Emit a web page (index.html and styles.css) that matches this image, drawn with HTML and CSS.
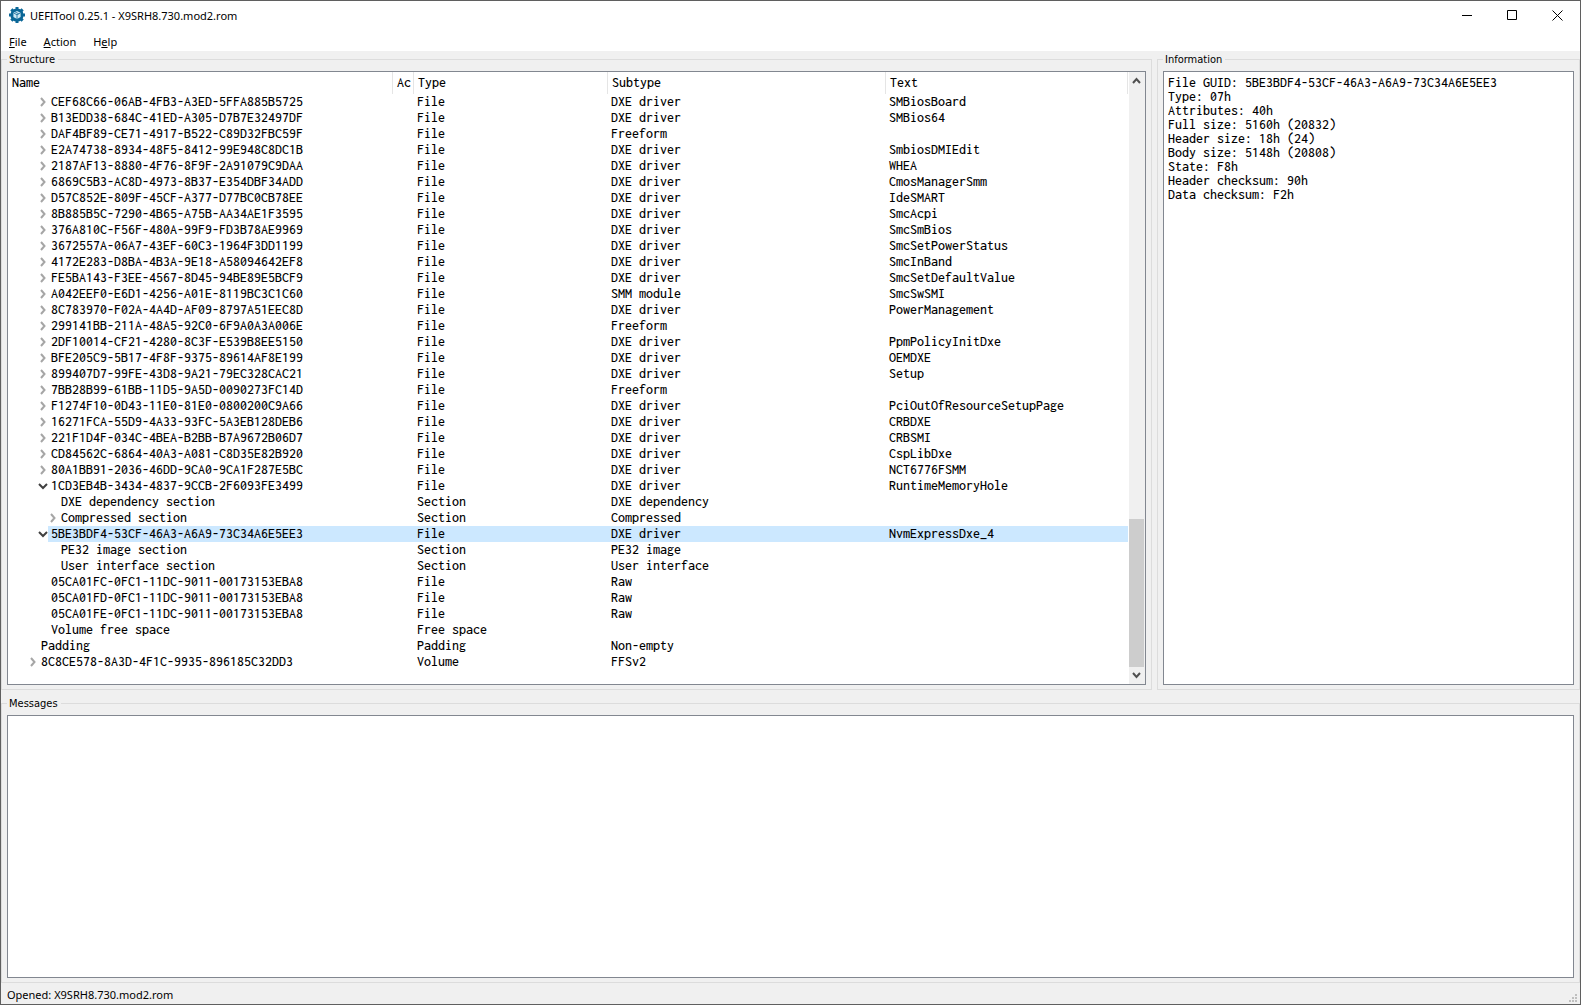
FILE: index.html
```html
<!DOCTYPE html>
<html lang="en">
<head>
<meta charset="utf-8">
<title>UEFITool 0.25.1 - X9SRH8.730.mod2.rom</title>
<link rel="stylesheet" href="styles.css">
</head>
<body>
<svg width="0" height="0" class="defs" aria-hidden="true">
  <symbol id="closed" viewBox="0 0 7 10"><path d="M1 1l3.500 4-3.500 4" fill="none" stroke="#a6a6a6" stroke-width="2"/></symbol>
  <symbol id="open" viewBox="0 0 10 7"><path d="M1 1l4 4 4-4" fill="none" stroke="#404040" stroke-width="2"/></symbol>
</svg>
<div class="window">
  <header class="titlebar">
    <svg class="app-icon" viewBox="0 0 16 16" aria-hidden="true">
      <circle cx="8" cy="8" r="6.6" fill="#0b6797"/>
      <path d="M8 0v16M0 8h16M2.340 2.340l11.320 11.320M13.660 2.340L2.340 13.660" stroke="#0b6797" stroke-width="3"/>
      <path d="M8 4l3.600 1.800v4.200l-3.600 2-3.600-2V5.800z" fill="#cfe8f4"/>
      <path d="M4.400 5.800l3.600 2 3.600-2M8 7.800V12M6.200 5l3.600 1.800" fill="none" stroke="#0b6797" stroke-width=".8"/>
    </svg>
    <h1 class="title">UEFITool 0.25.1 - X9SRH8.730.mod2.rom</h1>
    <div class="controls">
      <button type="button" aria-label="Minimize"><svg viewBox="0 0 11 11"><path d="M0 5.500h10"/></svg></button>
      <button type="button" aria-label="Maximize"><svg viewBox="0 0 11 11"><path d="M.5.5h9v9h-9z"/></svg></button>
      <button type="button" aria-label="Close"><svg viewBox="0 0 11 11"><path d="M.5.5l10 10M10.500.5l-10 10"/></svg></button>
    </div>
  </header>
  <nav class="menubar">
    <button type="button"><u>F</u>ile</button>
    <button type="button"><u>A</u>ction</button>
    <button type="button">H<u>e</u>lp</button>
  </nav>
  <main class="content">
    <div class="top">
      <fieldset class="group">
        <legend>Structure</legend>
        <div class="box tree">
          <table>
            <colgroup><col class="c-name"><col class="c-action"><col class="c-type"><col class="c-subtype"><col class="c-text"></colgroup>
            <thead><tr><th>Name</th><th>Ac</th><th>Type</th><th>Subtype</th><th>Text</th></tr></thead>
            <tbody>
<tr><td class="d2"><svg class="a"><use href="#closed"/></svg><span>CEF68C66-06AB-4FB3-A3ED-5FFA885B5725</span></td><td></td><td>File</td><td>DXE driver</td><td>SMBiosBoard</td></tr>
<tr><td class="d2"><svg class="a"><use href="#closed"/></svg><span>B13EDD38-684C-41ED-A305-D7B7E32497DF</span></td><td></td><td>File</td><td>DXE driver</td><td>SMBios64</td></tr>
<tr><td class="d2"><svg class="a"><use href="#closed"/></svg><span>DAF4BF89-CE71-4917-B522-C89D32FBC59F</span></td><td></td><td>File</td><td>Freeform</td><td></td></tr>
<tr><td class="d2"><svg class="a"><use href="#closed"/></svg><span>E2A74738-8934-48F5-8412-99E948C8DC1B</span></td><td></td><td>File</td><td>DXE driver</td><td>SmbiosDMIEdit</td></tr>
<tr><td class="d2"><svg class="a"><use href="#closed"/></svg><span>2187AF13-8880-4F76-8F9F-2A91079C9DAA</span></td><td></td><td>File</td><td>DXE driver</td><td>WHEA</td></tr>
<tr><td class="d2"><svg class="a"><use href="#closed"/></svg><span>6869C5B3-AC8D-4973-8B37-E354DBF34ADD</span></td><td></td><td>File</td><td>DXE driver</td><td>CmosManagerSmm</td></tr>
<tr><td class="d2"><svg class="a"><use href="#closed"/></svg><span>D57C852E-809F-45CF-A377-D77BC0CB78EE</span></td><td></td><td>File</td><td>DXE driver</td><td>IdeSMART</td></tr>
<tr><td class="d2"><svg class="a"><use href="#closed"/></svg><span>8B885B5C-7290-4B65-A75B-AA34AE1F3595</span></td><td></td><td>File</td><td>DXE driver</td><td>SmcAcpi</td></tr>
<tr><td class="d2"><svg class="a"><use href="#closed"/></svg><span>376A810C-F56F-480A-99F9-FD3B78AE9969</span></td><td></td><td>File</td><td>DXE driver</td><td>SmcSmBios</td></tr>
<tr><td class="d2"><svg class="a"><use href="#closed"/></svg><span>3672557A-06A7-43EF-60C3-1964F3DD1199</span></td><td></td><td>File</td><td>DXE driver</td><td>SmcSetPowerStatus</td></tr>
<tr><td class="d2"><svg class="a"><use href="#closed"/></svg><span>4172E283-D8BA-4B3A-9E18-A58094642EF8</span></td><td></td><td>File</td><td>DXE driver</td><td>SmcInBand</td></tr>
<tr><td class="d2"><svg class="a"><use href="#closed"/></svg><span>FE5BA143-F3EE-4567-8D45-94BE89E5BCF9</span></td><td></td><td>File</td><td>DXE driver</td><td>SmcSetDefaultValue</td></tr>
<tr><td class="d2"><svg class="a"><use href="#closed"/></svg><span>A042EEF0-E6D1-4256-A01E-8119BC3C1C60</span></td><td></td><td>File</td><td>SMM module</td><td>SmcSwSMI</td></tr>
<tr><td class="d2"><svg class="a"><use href="#closed"/></svg><span>8C783970-F02A-4A4D-AF09-8797A51EEC8D</span></td><td></td><td>File</td><td>DXE driver</td><td>PowerManagement</td></tr>
<tr><td class="d2"><svg class="a"><use href="#closed"/></svg><span>299141BB-211A-48A5-92C0-6F9A0A3A006E</span></td><td></td><td>File</td><td>Freeform</td><td></td></tr>
<tr><td class="d2"><svg class="a"><use href="#closed"/></svg><span>2DF10014-CF21-4280-8C3F-E539B8EE5150</span></td><td></td><td>File</td><td>DXE driver</td><td>PpmPolicyInitDxe</td></tr>
<tr><td class="d2"><svg class="a"><use href="#closed"/></svg><span>BFE205C9-5B17-4F8F-9375-89614AF8E199</span></td><td></td><td>File</td><td>DXE driver</td><td>OEMDXE</td></tr>
<tr><td class="d2"><svg class="a"><use href="#closed"/></svg><span>899407D7-99FE-43D8-9A21-79EC328CAC21</span></td><td></td><td>File</td><td>DXE driver</td><td>Setup</td></tr>
<tr><td class="d2"><svg class="a"><use href="#closed"/></svg><span>7BB28B99-61BB-11D5-9A5D-0090273FC14D</span></td><td></td><td>File</td><td>Freeform</td><td></td></tr>
<tr><td class="d2"><svg class="a"><use href="#closed"/></svg><span>F1274F10-0D43-11E0-81E0-0800200C9A66</span></td><td></td><td>File</td><td>DXE driver</td><td>PciOutOfResourceSetupPage</td></tr>
<tr><td class="d2"><svg class="a"><use href="#closed"/></svg><span>16271FCA-55D9-4A33-93FC-5A3EB128DEB6</span></td><td></td><td>File</td><td>DXE driver</td><td>CRBDXE</td></tr>
<tr><td class="d2"><svg class="a"><use href="#closed"/></svg><span>221F1D4F-034C-4BEA-B2BB-B7A9672B06D7</span></td><td></td><td>File</td><td>DXE driver</td><td>CRBSMI</td></tr>
<tr><td class="d2"><svg class="a"><use href="#closed"/></svg><span>CD84562C-6864-40A3-A081-C8D35E82B920</span></td><td></td><td>File</td><td>DXE driver</td><td>CspLibDxe</td></tr>
<tr><td class="d2"><svg class="a"><use href="#closed"/></svg><span>80A1BB91-2036-46DD-9CA0-9CA1F287E5BC</span></td><td></td><td>File</td><td>DXE driver</td><td>NCT6776FSMM</td></tr>
<tr><td class="d2"><svg class="a o"><use href="#open"/></svg><span>1CD3EB4B-3434-4837-9CCB-2F6093FE3499</span></td><td></td><td>File</td><td>DXE driver</td><td>RuntimeMemoryHole</td></tr>
<tr><td class="d3"><i class="a"></i><span>DXE dependency section</span></td><td></td><td>Section</td><td>DXE dependency</td><td></td></tr>
<tr><td class="d3"><svg class="a"><use href="#closed"/></svg><span>Compressed section</span></td><td></td><td>Section</td><td>Compressed</td><td></td></tr>
<tr class="selected"><td class="d2"><svg class="a o"><use href="#open"/></svg><span>5BE3BDF4-53CF-46A3-A6A9-73C34A6E5EE3</span></td><td></td><td>File</td><td>DXE driver</td><td>NvmExpressDxe_4</td></tr>
<tr><td class="d3"><i class="a"></i><span>PE32 image section</span></td><td></td><td>Section</td><td>PE32 image</td><td></td></tr>
<tr><td class="d3"><i class="a"></i><span>User interface section</span></td><td></td><td>Section</td><td>User interface</td><td></td></tr>
<tr><td class="d2"><i class="a"></i><span>05CA01FC-0FC1-11DC-9011-00173153EBA8</span></td><td></td><td>File</td><td>Raw</td><td></td></tr>
<tr><td class="d2"><i class="a"></i><span>05CA01FD-0FC1-11DC-9011-00173153EBA8</span></td><td></td><td>File</td><td>Raw</td><td></td></tr>
<tr><td class="d2"><i class="a"></i><span>05CA01FE-0FC1-11DC-9011-00173153EBA8</span></td><td></td><td>File</td><td>Raw</td><td></td></tr>
<tr><td class="d2"><i class="a"></i><span>Volume free space</span></td><td></td><td>Free space</td><td></td><td></td></tr>
<tr><td class="d1"><i class="a"></i><span>Padding</span></td><td></td><td>Padding</td><td>Non-empty</td><td></td></tr>
<tr><td class="d1"><svg class="a"><use href="#closed"/></svg><span>8C8CE578-8A3D-4F1C-9935-896185C32DD3</span></td><td></td><td>Volume</td><td>FFSv2</td><td></td></tr>
            </tbody>
          </table>
          <div class="scrollbar">
            <button type="button" aria-label="Scroll up"><svg viewBox="0 0 9 7"><path d="M1 6l3.500-4L8 6"/></svg></button>
            <div class="track"><div class="thumb"></div></div>
            <button type="button" aria-label="Scroll down"><svg viewBox="0 0 9 7"><path d="M1 1l3.500 4L8 1"/></svg></button>
          </div>
        </div>
      </fieldset>
      <fieldset class="group">
        <legend>Information</legend>
        <div class="box info">
          <p>File GUID: 5BE3BDF4-53CF-46A3-A6A9-73C34A6E5EE3</p>
          <p>Type: 07h</p>
          <p>Attributes: 40h</p>
          <p>Full size: 5160h (20832)</p>
          <p>Header size: 18h (24)</p>
          <p>Body size: 5148h (20808)</p>
          <p>State: F8h</p>
          <p>Header checksum: 90h</p>
          <p>Data checksum: F2h</p>
        </div>
      </fieldset>
    </div>
    <fieldset class="group">
      <legend>Messages</legend>
      <div class="box"></div>
    </fieldset>
  </main>
  <footer class="statusbar">
    <span>Opened: X9SRH8.730.mod2.rom</span>
    <svg class="grip" viewBox="0 0 8 8" aria-hidden="true"><path d="M6 0h2v2H6zM3 3h2v2H3zM6 3h2v2H6zM0 6h2v2H0zM3 6h2v2H3zM6 6h2v2H6z" fill="#bfbfbf"/></svg>
  </footer>
</div>
</body>
</html>
```
FILE: styles.css
```css
* {
  box-sizing: border-box;
}

body {
  margin: 0;
  background: #f0f0f0;
  color: #000;
  font: 11px/13px "Noto Sans", "Open Sans", sans-serif;
}

button {
  margin: 0;
  padding: 0;
  border: 0;
  background: none;
  color: inherit;
  font: inherit;
}

.defs {
  position: absolute;
}

.window {
  display: flex;
  flex-direction: column;
  min-height: 100vh;
  border: 1px solid #5f5f5f;
}

/* Title bar */
.titlebar {
  display: flex;
  align-items: center;
  height: 28px;
  padding-left: 8px;
  background: #fff;
}

.app-icon {
  width: 16px;
  height: 16px;
}

.title {
  flex: 1;
  margin: 0 0 0 5px;
  font-size: 11px;
  font-weight: 400;
}

.controls {
  display: flex;
}

.controls button {
  display: flex;
  align-items: center;
  justify-content: center;
  width: 45px;
  height: 28px;
}

.controls svg {
  width: 11px;
  height: 11px;
  fill: none;
  stroke: #000;
}

/* Menu bar */
.menubar {
  display: flex;
  height: 22px;
  padding: 2px 0 0 2px;
  background: #fff;
}

.menubar button {
  padding: 0 9px 0 6px;
}

.menubar button + button {
  padding-left: 8px;
}

/* Group boxes */
.content {
  display: grid;
  flex: 1;
  grid-template-columns: minmax(0, 1fr);
  grid-template-rows: auto 1fr;
  gap: 6px;
  padding-top: 1px;
}

.top {
  display: grid;
  grid-template-columns: minmax(0, 1151fr) minmax(0, 423fr);
  gap: 5px;
}

.group {
  display: flex;
  flex-direction: column;
  min-width: 0;
  margin: 0;
  padding: 5px 5px 4px;
  border: 1px solid #dcdcdc;
}

.group legend {
  padding: 1px 3px 0 2px;
  font: 11px/13px "DejaVu Sans Condensed", "DejaVu Sans", sans-serif;
}

.box {
  flex: 1;
  border: 1px solid #828790;
  background: #fff;
  font: 500 14px/16px Inconsolata, "Noto Sans Mono CJK JP", "Liberation Mono", monospace;
}

/* Structure tree */
.tree {
  display: flex;
  align-items: flex-start;
}

.tree table {
  flex: 1;
  min-width: 0;
  margin-bottom: 14px;
  border-collapse: separate;
  border-spacing: 0;
  table-layout: fixed;
  white-space: nowrap;
}

.c-name { width: 385px; }
.c-action { width: 21px; }
.c-type { width: 194px; }
.c-subtype { width: 278px; }

.tree th {
  height: 22px;
  padding: 0 0 0 4px;
  border-right: 1px solid #e5e5e5;
  font-weight: inherit;
  text-align: left;
}

.tree td {
  height: 16px;
  padding: 0 0 0 3px;
}

.tree td:first-child {
  padding-left: 0;
}

.tree td span {
  display: inline-block;
  padding-left: 3px;
  text-indent: 0;
  vertical-align: top;
}

.a {
  display: inline-block;
  width: 7px;
  height: 10px;
  margin: 3px 1px 3px 2px;
  vertical-align: top;
}

.a.o {
  width: 10px;
  height: 7px;
  margin: 5px 0 4px;
}

.d1 { text-indent: 20px; }
.d2 { text-indent: 30px; }
.d3 { text-indent: 40px; }

.selected td + td {
  background: #cce8ff;
}

.selected td:first-child {
  background: linear-gradient(#cce8ff, #cce8ff) no-repeat 40px 0;
}

/* Scroll bar */
.scrollbar {
  display: flex;
  flex-direction: column;
  align-self: stretch;
  width: 17px;
  padding-right: 1px;
  border-left: 1px solid #fff;
  background: #f0f0f0;
}

.scrollbar button {
  display: flex;
  align-items: center;
  justify-content: center;
  height: 17px;
}

.scrollbar svg {
  width: 9px;
  height: 7px;
  fill: none;
  stroke: #505050;
  stroke-width: 2;
}

.track {
  display: flex;
  flex: 1;
  flex-direction: column;
  justify-content: flex-end;
}

.thumb {
  height: 148px;
  background: #cdcdcd;
}

/* Information */
.info {
  padding: 4px;
  line-height: 14px;
}

.info p {
  margin: 0;
}

/* Status bar */
.statusbar {
  display: flex;
  align-items: center;
  justify-content: space-between;
  height: 21px;
  padding: 1px 3px 0 6px;
}

.grip {
  align-self: flex-end;
  width: 8px;
  height: 8px;
  margin-bottom: 2px;
}
```
